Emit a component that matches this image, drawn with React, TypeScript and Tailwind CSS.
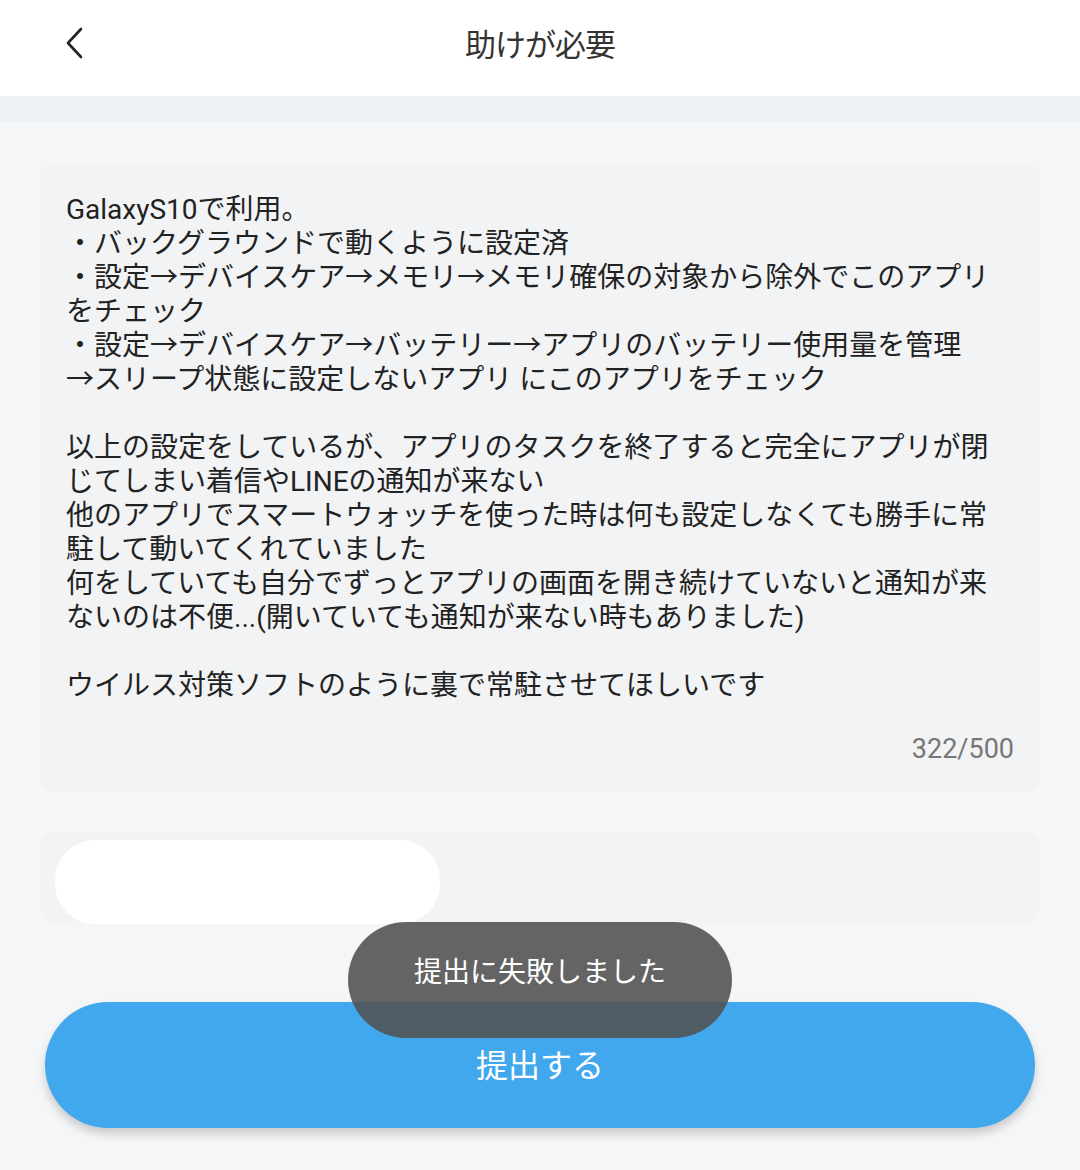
import React from "react";

const lines1 = [
  "GalaxyS10で利用。",
  "・バックグラウンドで動くように設定済",
  "・設定→デバイスケア→メモリ→メモリ確保の対象から除外でこのアプリ",
  "をチェック",
  "・設定→デバイスケア→バッテリー→アプリのバッテリー使用量を管理",
  "→スリープ状態に設定しないアプリ にこのアプリをチェック",
  "",
  "以上の設定をしているが、アプリのタスクを終了すると完全にアプリが閉",
  "じてしまい着信やLINEの通知が来ない",
  "他のアプリでスマートウォッチを使った時は何も設定しなくても勝手に常",
  "駐して動いてくれていました",
  "何をしていても自分でずっとアプリの画面を開き続けていないと通知が来",
  "ないのは不便...(開いていても通知が来ない時もありました)",
  "",
  "ウイルス対策ソフトのように裏で常駐させてほしいです",
];

export default function App() {
  return (
    <div
      className="relative w-[1080px] h-[1170px] bg-[#f5f6f7] overflow-hidden"
      style={{ fontFamily: 'Roboto, "Noto Sans CJK JP", sans-serif' }}
    >
      <header className="h-[96px] bg-white relative flex items-center justify-center pb-[6px]">
        <button className="absolute left-[56px] top-[23px] w-[36px] h-[40px] flex items-center justify-center">
          <svg width="24" height="34" viewBox="0 0 24 34">
            <polyline points="19,3 6,17 19,31" fill="none" stroke="#222" strokeWidth="2.6" strokeLinecap="round" strokeLinejoin="round" />
          </svg>
        </button>
        <h1 className="text-[31px] text-[#333] tracking-[-1px] leading-none">助けが必要</h1>
      </header>
      <div className="h-[26px] bg-[#eef2f5]" />
      <main className="px-[40px] pt-[40px] flex flex-col">
        <div className="bg-[#f1f3f5] rounded-[14px] h-[630px] pl-[26px] pr-[26px] pt-[31px] flex flex-col">
          <div className="text-[28px] leading-[34px] text-[#222] whitespace-nowrap">
            {lines1.map((l, i) => (
              <div key={i} className="h-[34px]">{l}</div>
            ))}
          </div>
          <div className="mt-[29px] text-right text-[27px] text-[#777] leading-[34px]">322/500</div>
        </div>
        <div className="mt-[40px] bg-[#f1f3f5] rounded-[14px] h-[90px]" />
        <div className="mt-[80px] mx-[5px] h-[126px] rounded-full bg-[#42a8ee] shadow-[0_6px_10px_rgba(0,0,0,0.18)] flex items-center justify-center pt-[2px]">
          <span className="text-[32px] text-white leading-none">提出する</span>
        </div>
      </main>
      <div className="absolute left-[55px] top-[840px] w-[385px] h-[84px] bg-white rounded-[40px]" />
      <div className="absolute left-[348px] top-[922px] w-[384px] h-[116px] rounded-[58px] bg-[rgba(82,82,82,0.89)] flex items-center justify-center pb-[14px]">
        <span className="text-[28px] text-white leading-none">提出に失敗しました</span>
      </div>
    </div>
  );
}
